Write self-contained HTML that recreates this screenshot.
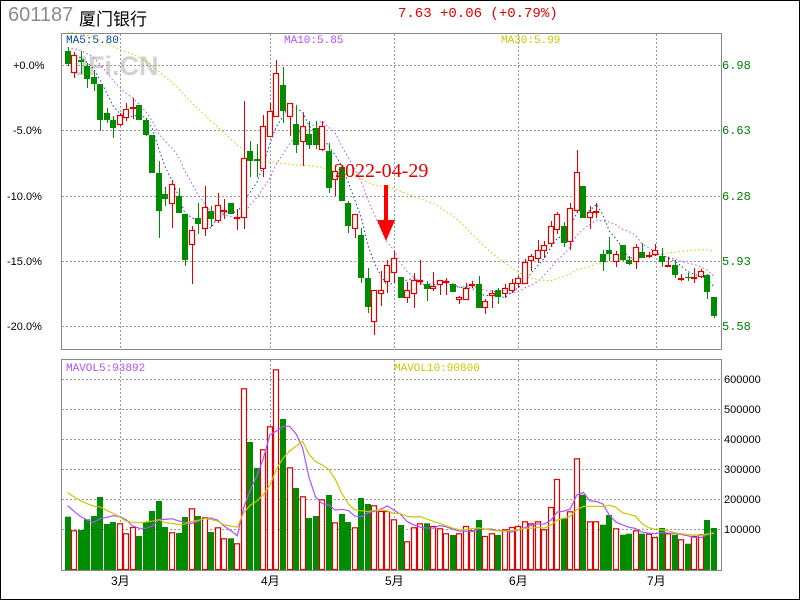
<!DOCTYPE html>
<html><head><meta charset="utf-8"><style>
html,body{margin:0;padding:0;background:#fff;}
#w{position:relative;width:798px;height:598px;border:1px solid #000;overflow:hidden;font-family:"Liberation Mono",monospace;}
.t{position:absolute;white-space:nowrap;}
</style></head><body><div id="w">
<div class="t" style="left:7px;top:3px;font:20px 'Liberation Sans',sans-serif;color:#8c8c8c;">601187</div>
<div class="t" style="left:78px;top:4px;font:17px 'Liberation Sans','Noto Sans CJK SC',sans-serif;color:#000;">厦门银行</div>
<div class="t" style="left:397px;top:5px;font:14px 'Liberation Mono',monospace;color:#e00000;">7.63 +0.06 (+0.79%)</div>
<svg id="s" width="798" height="598" style="position:absolute;left:0;top:0" xmlns="http://www.w3.org/2000/svg">
<g font-family="Liberation Sans,sans-serif" font-size="11">
<text x="12" y="68" fill="#000">+0.0%</text>
<text x="12" y="133" fill="#000">-5.0%</text>
<text x="6" y="199" fill="#000">-10.0%</text>
<text x="6" y="264" fill="#000">-15.0%</text>
<text x="6" y="329" fill="#000">-20.0%</text>
</g>
<g font-family="Liberation Mono,monospace" font-size="12" fill="#008000">
<text x="721" y="68">6.98</text><text x="721" y="133">6.63</text><text x="721" y="199">6.28</text><text x="721" y="264">5.93</text><text x="721" y="329">5.58</text>
</g>
<g font-family="Liberation Sans,sans-serif" font-size="11" fill="#000">
<text x="723" y="382">600000</text><text x="723" y="412">500000</text><text x="723" y="442">400000</text><text x="723" y="472">300000</text><text x="723" y="502">200000</text><text x="723" y="532">100000</text>
</g>
<g font-family="Liberation Sans,Noto Sans CJK SC,sans-serif" font-size="12" fill="#000">
<text x="110" y="584">3月</text><text x="260" y="584">4月</text><text x="384" y="584">5月</text><text x="508" y="584">6月</text><text x="646" y="584">7月</text>
</g>
<text x="72" y="74" font-family="Liberation Sans,sans-serif" font-weight="bold" font-size="27" fill="#d2d2d2">JFi.CN</text>
<g font-family="Liberation Mono,monospace" font-size="11">
<text x="65" y="42" fill="#004c99">MA5:5.80</text>
<text x="283" y="42" fill="#b050ff">MA10:5.85</text>
<text x="500" y="42" fill="#c8c800">MA30:5.99</text>
<text x="65" y="370" fill="#b050ff">MAVOL5:93892</text>
<text x="393" y="370" fill="#c8c800">MAVOL10:90800</text>
</g>
<g id="grid" stroke="#999" stroke-dasharray="2,2" stroke-width="1"></g>
<g id="ma"></g>
<g id="c"></g>
<g id="mav"></g>
<rect x="60.5" y="32.5" width="660" height="316" fill="none" stroke="#888"/>
<rect x="60.5" y="358.5" width="660" height="211" fill="none" stroke="#888"/>
<text x="334" y="176" font-family="Liberation Serif,serif" font-size="20" fill="#e00000">2022-04-29</text>
<rect x="383" y="184" width="4" height="36" fill="#f00"/>
<polygon points="376,219 394,219 385,240" fill="#f00"/>
</svg>
<script>
var C=[
['G',50,63,46,65],['R',54,72,51,77],['G',59,61,50,73],['G',65,78,62,87],['G',76,83,70,90],['G',83,119,83,130],['G',112,119,107,122],['G',119,127,115,137],['R',114,124,112,125],['R',108,117,102,120],
['R',106,108,97,118],['G',104,119,104,119],['G',119,134,117,135],['G',134,172,134,172],['G',172,210,160,237],['G',193,198,186,205],['R',183,203,179,227],['G',195,212,187,212],['G',213,259,213,265],['R',229,244,225,283],
['G',217,223,202,233],['R',206,228,185,235],['G',210,218,205,226],['R',204,220,192,222],['R',209,211,198,218],['G',202,213,202,213],['R',216,218,208,229],['R',157,217,100,228],['G',150,160,140,176],['G',158,160,143,176],
['R',125,168,114,176],['R',110,136,102,136],['R',72,116,59,116],['G',84,110,66,122],['R',102,116,102,135],['G',123,144,104,152],['R',125,141,112,165],['G',133,144,120,148],['G',127,144,120,148],['R',125,149,120,150],
['G',150,187,142,192],['R',170,179,164,195],['G',166,200,166,200],['G',202,225,200,232],['R',213,228,213,237],['G',234,277,227,282],['G',277,306,267,312],['R',289,321,289,334],['R',289,293,270,305],['R',264,281,259,292],
['R',257,272,250,282],['G',276,297,276,297],['R',289,297,281,302],['R',279,293,272,307],['R',279,281,259,284],['G',283,288,280,300],['R',285,288,271,290],['R',279,284,279,294],['R',280,282,277,294],['G',283,291,283,291],
['R',296,299,295,303],['R',287,299,282,299],['R',283,284,280,287],['G',283,307,275,307],['R',300,307,298,313],['R',292,295,289,307],['G',289,296,287,303],['R',287,293,283,297],['R',282,290,278,292],['R',277,283,275,287],
['R',261,283,258,283],['R',255,260,253,270],['R',249,258,239,262],['R',244,250,240,257],['R',225,243,220,246],['R',213,229,211,233],['G',225,242,221,246],['R',207,241,202,249],['R',171,210,149,211],['G',185,217,185,217],
['R',211,217,205,228],['R',210,212,202,217],['G',253,261,249,270],['G',249,253,236,260],['R',253,261,250,266],['G',244,259,244,260],['G',259,263,255,264],['R',246,261,243,268],['G',251,257,242,257],['R',254,255,251,257],
['R',249,254,243,255],['G',255,261,247,266],['R',264,265,256,266],['G',264,274,259,277],['R',277,278,273,280],['G',276,277,272,280],['R',276,278,267,282],['R',270,276,268,277],['G',274,291,273,298],['G',296,315,296,317]];
var V=[515.7,529.3,529,518.3,515,496,523,521,522.3,532.3,526,535,521,510,500,526,531.3,532,516,507.3,515,516.3,531,526.3,537.3,537.3,542.3,387.3,441,467,448.3,425.3,368.3,418,466.3,487,495.3,517,515,498.3,494,521.3,513,521,526.3,497,503,504.3,510,510,518.3,524,540.3,526.3,522.3,522.3,525,527.3,532.3,534,532.3,525,529.3,519,535,532.3,534,528.3,526,525,520.3,522.3,520.3,528.3,506,478,517.7,510.3,457.3,493.7,520.3,520.3,523.7,514,527.3,533.7,532.7,529.3,532.7,532.7,536,527,532.3,533.7,538.3,542.7,535,533.3,519,527];
var NS="http://www.w3.org/2000/svg";
function el(g,t,a){var e=document.createElementNS(NS,t);for(var k in a)e.setAttribute(k,a[k]);document.getElementById(g).appendChild(e);return e;}
[64,129,195,260,325,378,408,438,468,498,528].forEach(function(y){el('grid','line',{x1:61,x2:720,y1:y+.5,y2:y+.5});});
[119,269,393,517,655].forEach(function(x){el('grid','line',{x1:x+.5,x2:x+.5,y1:33,y2:348});el('grid','line',{x1:x+.5,x2:x+.5,y1:359,y2:569});});
var X=function(i){return 66.5+6.53*i;};
var cl=[];
C.forEach(function(c,i){var x=X(i),r=c[0]=='R',col=r?'#e00000':'#008c00';
cl.push(r?c[1]:c[2]);
el('c','line',{x1:Math.round(x)+.5,x2:Math.round(x)+.5,y1:c[3],y2:c[4],stroke:col,'stroke-width':1});
var h=Math.max(c[2]-c[1],1);
if(r)el('c','rect',{x:Math.round(x)-2.5,y:c[1]+.5,width:5,height:Math.max(h-1,1),fill:'#fff',stroke:col,'stroke-width':1.2});
else el('c','rect',{x:Math.round(x)-3,y:c[1],width:6,height:h,fill:col});
var vt=V[i];
if(r)el('c','rect',{x:Math.round(x)-2.5,y:vt+.5,width:5,height:569-vt-1,fill:'#fff',stroke:col,'stroke-width':1.2});
else el('c','rect',{x:Math.round(x)-3,y:vt,width:6,height:569-vt,fill:col});
});
function ma(arr,n,pre){var o=[];for(var i=0;i<arr.length;i++){var s=0,k=0;for(var j=Math.max(0,i-n+1);j<=i;j++){s+=arr[j];k++;}while(k<n){s+=pre;k++;}o.push(s/n);}return o;}
function pl(g,a,col,dash,w){var p=a.map(function(y,i){return X(i).toFixed(1)+','+y.toFixed(1);}).join(' ');var at={points:p,fill:'none',stroke:col,'stroke-width':w||1};if(dash)at['stroke-dasharray']=dash;el(g,'polyline',at);}
pl('ma',ma(cl,5,52),'#004c99','1.5,2.5');
pl('ma',ma(cl,10,45),'#b050ff','1.5,2.5');
pl('ma',ma(cl,30,30),'#c8c800','1.5,2.5');
pl('mav',ma(V,5,502),'#b050ff',null,1.2);
pl('mav',ma(V,10,489),'#c8c800',null,1.2);
</script>
</div></body></html>
